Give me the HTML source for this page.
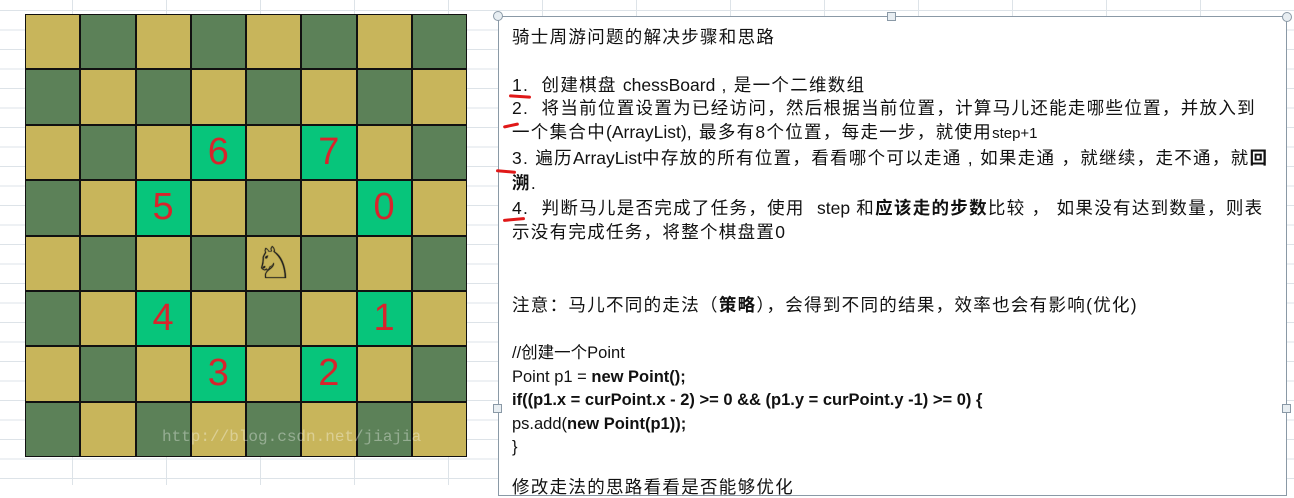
<!DOCTYPE html>
<html><head><meta charset="utf-8"><style>
body{margin:0;width:1294px;height:485px;overflow:hidden;background:#fff;position:relative;font-family:"Liberation Sans","Noto Sans CJK SC",sans-serif;}
.grid{position:absolute;inset:0;background-image:linear-gradient(#dde3e8 1px,transparent 1px),linear-gradient(90deg,#dde3e8 1px,transparent 1px);background-size:94px 19.5px;background-position:72px 10px;}
#board{position:absolute;left:25px;top:14px;width:442px;height:443px;display:grid;grid-template-columns:repeat(8,1fr);grid-template-rows:repeat(8,1fr);background:#111;gap:2px;padding:0;box-sizing:border-box;border:1px solid #111}
#board div{display:flex;align-items:center;justify-content:center;color:#d8242c;font-size:38px;}
.y{background:#c8b55b}.d{background:#5c8158}.g{background:#07c57b}
.box{position:absolute;left:498px;top:16px;width:789px;height:480px;border:1.5px solid #8a99a6;background:#fff;box-sizing:border-box}
.t{position:absolute;left:512px;font-size:17.5px;line-height:22px;color:#111;white-space:nowrap;letter-spacing:1.3px}
.l{letter-spacing:0}
.c{letter-spacing:0;font-size:16.5px}
b{font-weight:bold}
.mk{position:absolute;height:3px;background:#e01818;border-radius:3px}
.h{position:absolute;width:9px;height:9px;border:1px solid #8a99a6;background:#e8eef2;box-sizing:border-box}
</style></head><body>
<div class="grid"></div>
<div id="board">
<div class="y"></div><div class="d"></div><div class="y"></div><div class="d"></div><div class="y"></div><div class="d"></div><div class="y"></div><div class="d"></div>
<div class="d"></div><div class="y"></div><div class="d"></div><div class="y"></div><div class="d"></div><div class="y"></div><div class="d"></div><div class="y"></div>
<div class="y"></div><div class="d"></div><div class="y"></div><div class="g">6</div><div class="y"></div><div class="g">7</div><div class="y"></div><div class="d"></div>
<div class="d"></div><div class="y"></div><div class="g">5</div><div class="y"></div><div class="d"></div><div class="y"></div><div class="g">0</div><div class="y"></div>
<div class="y"></div><div class="d"></div><div class="y"></div><div class="d"></div><div class="y" style="color:#222;font-size:44px;text-shadow:0 0 1px #000">♘</div><div class="d"></div><div class="y"></div><div class="d"></div>
<div class="d"></div><div class="y"></div><div class="g">4</div><div class="y"></div><div class="d"></div><div class="y"></div><div class="g">1</div><div class="y"></div>
<div class="y"></div><div class="d"></div><div class="y"></div><div class="g">3</div><div class="y"></div><div class="g">2</div><div class="y"></div><div class="d"></div>
<div class="d"></div><div class="y"></div><div class="d"></div><div class="y"></div><div class="d"></div><div class="y"></div><div class="d"></div><div class="y"></div>
</div>
<div style="position:absolute;left:162px;top:428px;color:rgba(255,255,255,.35);font-family:'Liberation Mono',monospace;font-size:16px">http://blog.csdn.net/jiajia</div>
<div class="box"></div>
<div class="h" style="left:493px;top:11px;border-radius:50%;width:10px;height:10px"></div>
<div class="h" style="left:887px;top:12px"></div>
<div class="h" style="left:1282px;top:12px;border-radius:50%;width:10px;height:10px"></div>
<div class="h" style="left:493px;top:404px"></div>
<div class="h" style="left:1282px;top:404px"></div>
<div class="t" style="top:26px">骑士周游问题的解决步骤和思路</div>
<div class="t" style="top:74px">1.&nbsp; 创建棋盘 <span class="l">chessBoard</span> , 是一个二维数组</div>
<div class="t" style="top:97px">2.&nbsp; 将当前位置设置为已经访问，然后根据当前位置，计算马儿还能走哪些位置，并放入到</div>
<div class="t" style="top:121px">一个集合中<span class="l">(ArrayList)</span>, 最多有8个位置，每走一步，就使用<span style="font-size:15px;letter-spacing:0">step+1</span></div>
<div class="t" style="top:147px">3. 遍历<span class="l">ArrayList</span>中存放的所有位置，看看哪个可以走通 , 如果走通 ，就继续，走不通，就<b>回</b></div>
<div class="t" style="top:172px"><b>溯</b>.</div>
<div class="t" style="top:197px">4.&nbsp; 判断马儿是否完成了任务，使用&nbsp; <span class="l">step</span> 和<b>应该走的步数</b>比较 ， 如果没有达到数量，则表</div>
<div class="t" style="top:221px">示没有完成任务，将整个棋盘置0</div>
<div class="t" style="top:294px">注意：马儿不同的走法（<b>策略</b>），会得到不同的结果，效率也会有影响(优化)</div>
<div class="t c" style="top:342px">//创建一个Point</div>
<div class="t c" style="top:366px">Point p1 = <b>new Point();</b></div>
<div class="t c" style="top:389px"><b>if((p1.x = curPoint.x - 2) &gt;= 0 &amp;&amp; (p1.y = curPoint.y -1) &gt;= 0) {</b></div>
<div class="t c" style="top:413px">ps.add(<b>new Point(p1));</b></div>
<div class="t c" style="top:436px">}</div>
<div class="t" style="top:476px">修改走法的思路看看是否能够优化</div>
<div class="mk" style="left:509px;top:95px;width:22px;transform:rotate(4deg)"></div>
<div class="mk" style="left:503px;top:124px;width:16px;transform:rotate(-12deg)"></div>
<div class="mk" style="left:496px;top:170px;width:20px;transform:rotate(5deg)"></div>
<div class="mk" style="left:503px;top:218px;width:22px;transform:rotate(-5deg)"></div>
</body></html>
